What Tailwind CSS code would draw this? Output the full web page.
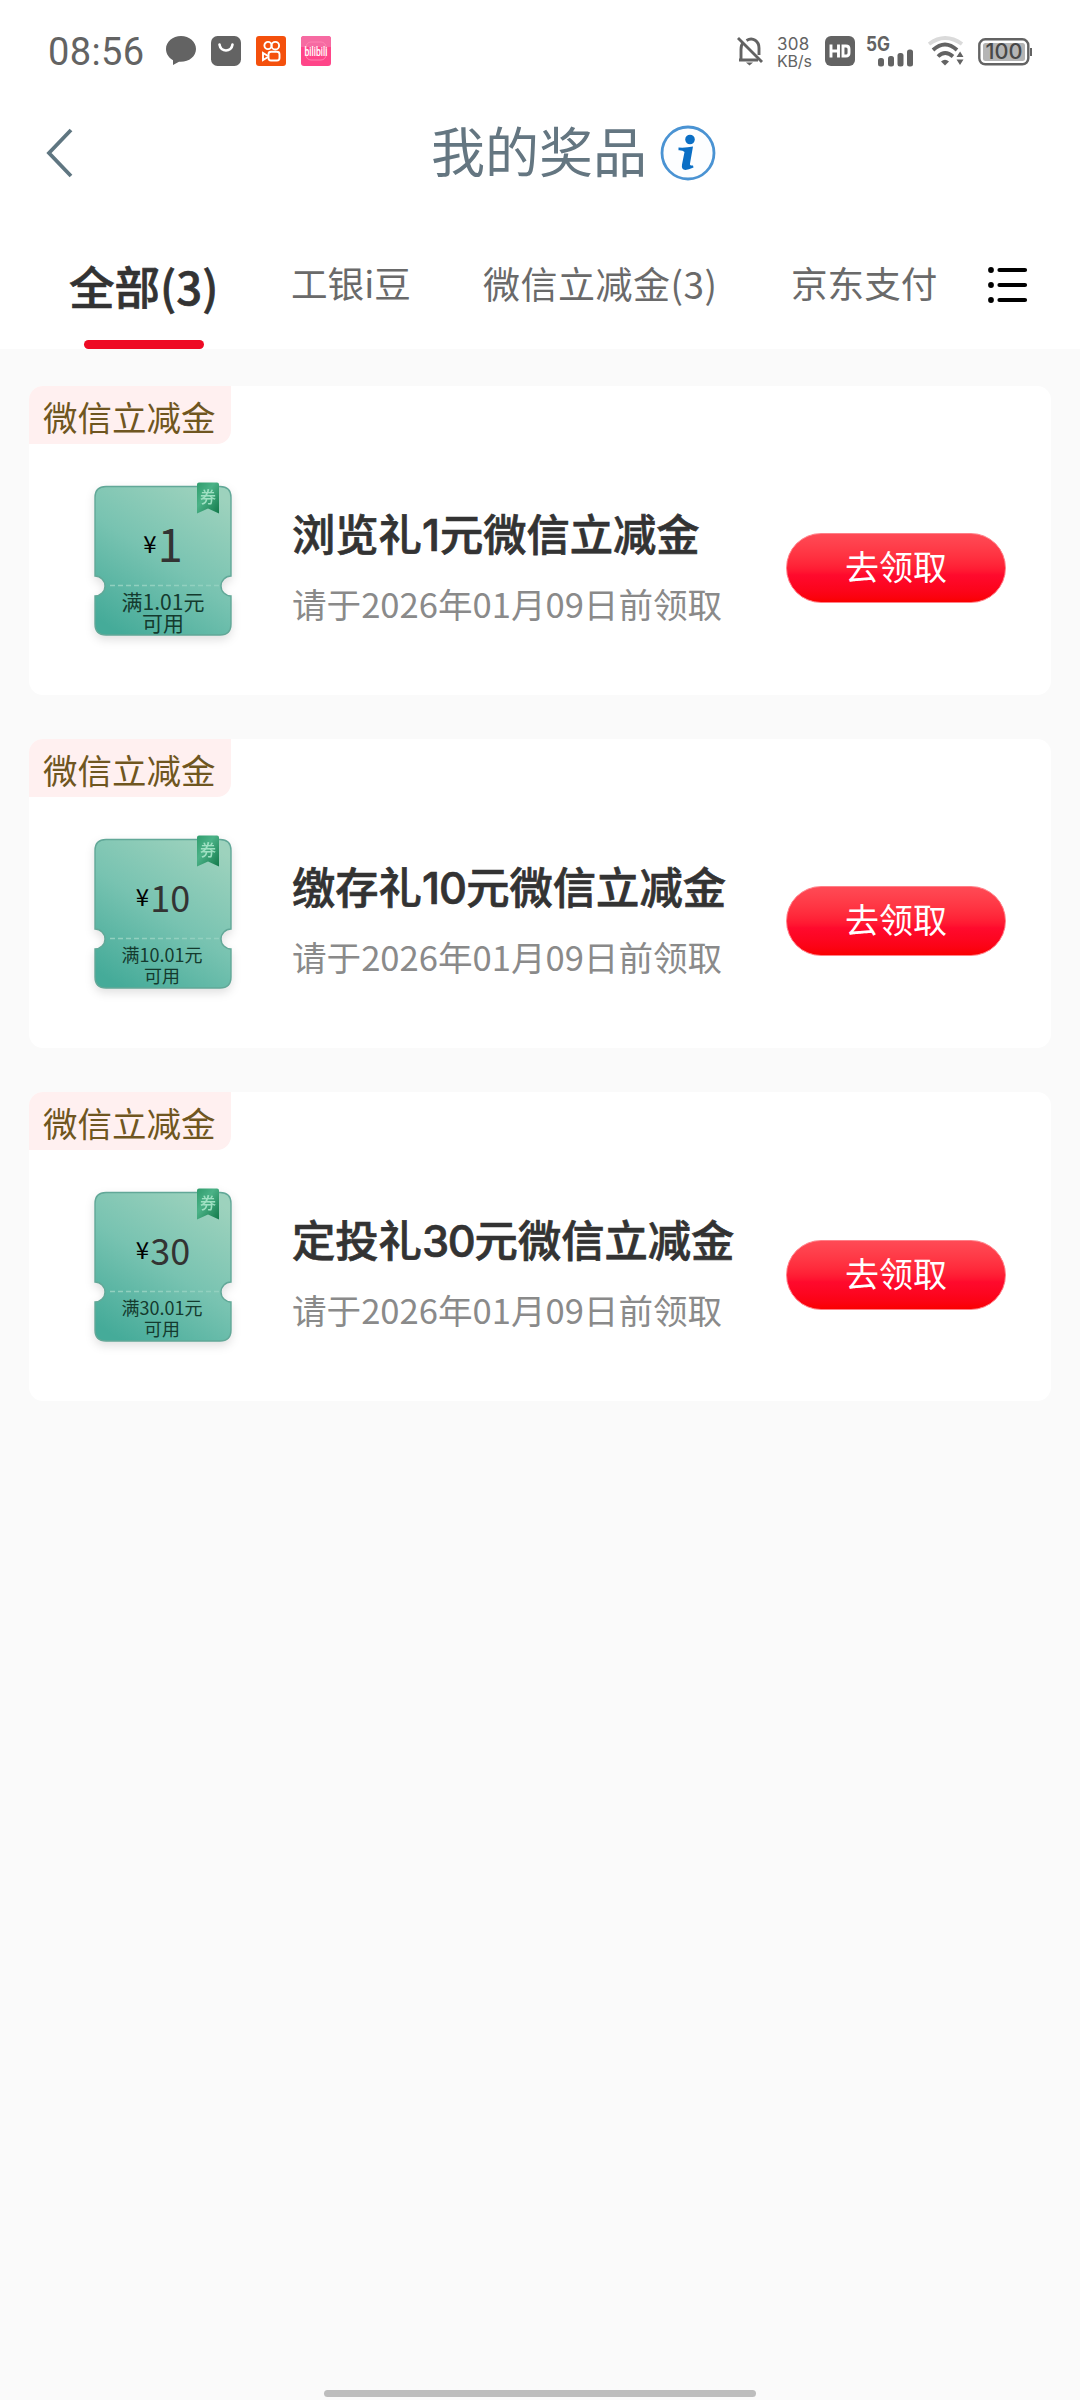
<!DOCTYPE html>
<html lang="zh-CN">
<head>
<meta charset="utf-8">
<title>我的奖品</title>
<script src="https://cdn.jsdelivr.net/npm/@tailwindcss/browser@4"></script>
</head>
<body class="w-[1080px] h-[2400px] overflow-hidden bg-[#fafafa] font-['Noto_Sans_CJK_SC',sans-serif] flex flex-col">

<svg width="0" height="0" class="absolute">
  <defs>
    <linearGradient id="tk" x1="0.8" y1="0" x2="0.2" y2="1">
      <stop offset="0" stop-color="#9dd2bd"/><stop offset="0.5" stop-color="#78c3b1"/><stop offset="1" stop-color="#45ab99"/>
    </linearGradient>
    <linearGradient id="rb" x1="0" y1="0" x2="1" y2="1">
      <stop offset="0" stop-color="#2f9c6c"/><stop offset="0.4" stop-color="#4bb287"/><stop offset="1" stop-color="#12794a"/>
    </linearGradient>
    <symbol id="ticket" viewBox="0 0 153 170">
      <path d="M19 12.500H133Q144 12.500 144 23.500V102A10 10 0 0 0 144 122V150Q144 161 133 161H19Q8 161 8 150V122A10 10 0 0 0 8 102V23.500Q8 12.500 19 12.500Z" fill="url(#tk)" stroke="#62a898" stroke-width="1.4"/>
      <path d="M23 111.500H132" stroke="#92d0bf" stroke-width="1.3" stroke-dasharray="5 3"/>
      <path d="M110 10.500Q110 8.500 112 8.500H130Q132 8.500 132 10.500V39.500L121 34.500L110 39.500Z" fill="url(#rb)"/>
      <text x="121" y="29" font-size="16" font-weight="500" fill="#9fe0c2" text-anchor="middle">券</text>
    </symbol>
  </defs>
</svg>

<header class="h-[349px] shrink-0 bg-white flex flex-col">
  <div class="h-[102px] flex items-center pl-[48px] pr-[48px] text-[#636363]">
    <span class="w-[118px] text-[38px] leading-[38px] mt-[2px] font-['Roboto'] tracking-[0.4px]">08:56</span>
    <div class="flex gap-[15px]">
      <svg width="30" height="30" viewBox="0 0 30 30"><path d="M15 0C6.700 0 0 5.700 0 13c0 5 3 8.900 7 11.200V29l6-3.200c9.500.8 17-5.300 17-12.800C30 5.700 23.300 0 15 0Z" fill="#636363"/></svg>
      <svg width="30" height="30" viewBox="0 0 30 30"><rect width="30" height="30" rx="6.500" fill="#636363"/><path d="M8.500 8.500c1 8 12 8 13 0" fill="none" stroke="#fff" stroke-width="2.600" stroke-linecap="round"/></svg>
      <svg width="30" height="30" viewBox="0 0 30 30"><rect width="30" height="30" rx="3" fill="#f4500c"/><g fill="none" stroke="#fff" stroke-width="1.900"><circle cx="12" cy="9.500" r="3.600"/><circle cx="19.300" cy="9.700" r="3.800"/><rect x="12.500" y="15.700" width="11" height="8.800" rx="2.500"/><path d="M12 20L7 17v7l5-3"/></g></svg>
      <svg width="30" height="30" viewBox="0 0 30 30"><rect width="30" height="30" rx="3" fill="#ff4589"/><path d="M0 3q0-3 3-3h24q3 0 3 3v8H0Z" fill="#f66ba2"/><rect x="5" y="6" width="20" height="18" rx="5" fill="none" stroke="#ff82b1"/><text x="15" y="19.500" text-anchor="middle" font-family="Roboto" font-weight="500" font-size="12" textLength="23" lengthAdjust="spacingAndGlyphs" fill="#fff">bilibili</text></svg>
    </div>
    <div class="ml-auto flex items-center">
      <svg width="28" height="30" viewBox="0 0 28 30"><g fill="none" stroke="#636363" stroke-width="2.900"><path d="M2 2L26 26"/><path d="M3 24H22M5 24V13.500Q5 9 7 7M10.500 4.500C17 .5 23 5.500 23 12v7"/></g><path d="M10 26.500h7l-3.500 3Z" fill="#636363"/></svg>
      <div class="mt-[3px] ml-[13px] w-[48px] flex flex-col font-['Inter'] text-[17px] leading-[17px]"><span class="tracking-[0.3px]">308</span><span class="text-[16px] tracking-[-0.2px]">KB/s</span></div>
      <svg width="30" height="30" viewBox="0 0 30 30"><rect width="30" height="30" rx="6" fill="#636363"/><path d="M6 8.500V21.500M13.500 8.500V21.500M6 15H13.500M18 10V20H21Q24 20 24 17V13Q24 10 21 10Z" fill="none" stroke="#fff" stroke-width="2.900"/></svg>
      <svg class="ml-[10px] overflow-visible" width="51" height="32" viewBox="0 0 51 32"><text x="1" y="16" font-family="Inter" font-weight="700" font-size="19.500" textLength="24" lengthAdjust="spacingAndGlyphs" fill="#636363">5G</text><g fill="#636363"><rect x="13" y="23" width="6" height="8.500" rx="2.500"/><rect x="23" y="21" width="6" height="10.500" rx="2.500"/><rect x="32.500" y="18" width="6" height="13.500" rx="2.500"/><rect x="42" y="14.500" width="6" height="17" rx="2.500"/></g></svg>
      <svg class="ml-[12px]" width="37" height="30" viewBox="0 0 37 30"><g fill="none" stroke-width="3.800"><path d="M1 8Q17-4 34 8" stroke="#dadada"/><path d="M5 14Q17 3 29 14M10 20.500Q17 13.500 25 20.500" stroke="#636363"/></g><path d="M13 25.500Q17 22 21 25.500L17 29.500Z" fill="#636363"/><path d="M28.500 21l3.600-5.500L35.500 21ZM28.500 23.500h7l-3.500 5.500Z" fill="#636363"/></svg>
      <svg class="ml-[13px]" width="54" height="32" viewBox="0 0 54 32"><rect x="1.300" y="4.300" width="49" height="25" rx="6" fill="none" stroke="#636363" stroke-width="2.400"/><rect x="5" y="8" width="42" height="18" rx="2.500" fill="#b5b5b5"/><path d="M53 13v8" stroke="#636363" stroke-width="2"/><text x="26" y="24.300" text-anchor="middle" font-family="Inter" font-weight="500" font-size="21" textLength="37" lengthAdjust="spacingAndGlyphs" fill="#484848">100</text></svg>
    </div>
  </div>

  <div class="h-[102px] flex items-center pl-[44px]">
    <svg width="30" height="50" viewBox="0 0 30 50"><path d="M27 2L5 25L27 48" fill="none" stroke="#5f7681" stroke-width="3.800"/></svg>
    <h1 class="-mt-[7px] ml-[357px] text-[54px] leading-[60px] text-[#647681]">我的奖品</h1>
    <svg class="ml-[12px]" width="58" height="58" viewBox="0 0 58 58"><circle cx="29" cy="29" r="26" fill="#fdfeff" stroke="#4a93d3" stroke-width="2.800"/><circle cx="31" cy="15.500" r="4.800" fill="#0b6fc5"/><path d="M19.500 23.500Q27 24 34 22.500L31 39.500Q30.500 42 34 41.500L34.500 43.500Q21.500 49.500 23 40.500L25.500 28Q24 26 19.500 26.200Z" fill="#0b6fc5"/></svg>
  </div>

  <nav class="h-[145px] flex pl-[69px] text-[37px] text-[#6a6a6a] whitespace-nowrap">
    <div class="w-[222px] h-full flex flex-col">
      <span class="mt-[53px] text-[45.500px] leading-[56px] font-medium text-[#333] [-webkit-text-stroke:0.7px_#333]">全部(3)</span>
      <span class="mt-auto ml-[15px] w-[120px] h-[9px] rounded-full bg-[#ee0a24]"></span>
    </div>
    <span class="w-[192px] mt-[51px] leading-[56px] text-[36.600px]">工银i豆</span>
    <span class="w-[308px] mt-[51px] leading-[56px] tracking-[0.5px]">微信立减金(3)</span>
    <span class="w-[196px] mt-[51px] leading-[56px] text-[36.600px]">京东支付</span>
    <svg class="mt-[61px]" width="42" height="40" viewBox="0 0 42 40"><g stroke="#000" stroke-width="4.200" stroke-linecap="round"><path d="M12.500 5H38M12.500 20H38M12.500 35H38"/></g><circle cx="4" cy="5" r="2.900"/><circle cx="4" cy="20" r="2.900"/><circle cx="4" cy="35" r="2.900"/></svg>
  </nav>
</header>

<main class="pt-[37px] px-[29px] flex flex-col gap-[44px]">
  <section class="h-[309px] rounded-[14px] bg-white overflow-hidden flex flex-col">
    <div class="w-[202px] h-[58px] rounded-br-[14px] bg-[#fff0f0] pl-[14px] text-[34.500px] leading-[60px] text-[#6f5620]">微信立减金</div>
    <div class="flex">
      <div class="relative ml-[58px] mt-[30px] w-[153px] h-[170px]">
        <svg class="absolute inset-0 drop-shadow-[0_4px_5px_rgba(0,0,0,0.12)]" width="153" height="170"><use href="#ticket"/></svg>
        <div class="relative h-full w-[152px] flex flex-col items-center">
          <div class="mt-[39px] h-[60px] flex items-center text-[#333]"><span class="text-[24px] leading-[60px] text-black">¥</span><span class="ml-[1px] text-[45px] leading-[60px]">1</span></div>
          <div class="mt-[18px] text-center text-[21px] leading-[21px] text-[#143a2e]">满1.01元<br>可用</div>
        </div>
      </div>
      <div class="ml-[52px] mt-[60px] w-[494px] whitespace-nowrap">
        <h2 class="text-[43.300px] leading-[56px] font-medium text-[#333] [-webkit-text-stroke:0.7px_#333]">浏览礼<span class="font-['Inter']">1</span>元微信立减金</h2>
        <p class="mt-[16px] text-[34.600px] leading-[48px] text-[#8a8a8a]">请于2026年01月09日前领取</p>
      </div>
      <button class="mt-[89px] w-[220px] h-[70px] rounded-full bg-linear-to-b from-[#ff4a55] via-[#ff0a2d] via-60% to-[#fa0000] border border-[#ff8088] text-[34px] leading-[64px] pb-[4px] text-white">去领取</button>
    </div>
  </section>

  <section class="h-[309px] rounded-[14px] bg-white overflow-hidden flex flex-col">
    <div class="w-[202px] h-[58px] rounded-br-[14px] bg-[#fff0f0] pl-[14px] text-[34.500px] leading-[60px] text-[#6f5620]">微信立减金</div>
    <div class="flex">
      <div class="relative ml-[58px] mt-[30px] w-[153px] h-[170px]">
        <svg class="absolute inset-0 drop-shadow-[0_4px_5px_rgba(0,0,0,0.12)]" width="153" height="170"><use href="#ticket"/></svg>
        <div class="relative h-full w-[152px] flex flex-col items-center">
          <div class="mt-[39px] h-[60px] flex items-center text-[#333]"><span class="text-[24px] leading-[60px] text-black">¥</span><span class="ml-[1px] text-[36px] leading-[60px]">10</span></div>
          <div class="mt-[18px] pr-[2px] text-center text-[18px] leading-[21px] text-[#143a2e]">满10.01元<br>可用</div>
        </div>
      </div>
      <div class="ml-[52px] mt-[60px] w-[494px] whitespace-nowrap">
        <h2 class="text-[43.300px] leading-[56px] font-medium text-[#333] [-webkit-text-stroke:0.7px_#333]">缴存礼<span class="font-['Inter'] tracking-[-0.8px]">10</span>元微信立减金</h2>
        <p class="mt-[16px] text-[34.600px] leading-[48px] text-[#8a8a8a]">请于2026年01月09日前领取</p>
      </div>
      <button class="mt-[89px] w-[220px] h-[70px] rounded-full bg-linear-to-b from-[#ff4a55] via-[#ff0a2d] via-60% to-[#fa0000] border border-[#ff8088] text-[34px] leading-[64px] pb-[4px] text-white">去领取</button>
    </div>
  </section>

  <section class="h-[309px] rounded-[14px] bg-white overflow-hidden flex flex-col">
    <div class="w-[202px] h-[58px] rounded-br-[14px] bg-[#fff0f0] pl-[14px] text-[34.500px] leading-[60px] text-[#6f5620]">微信立减金</div>
    <div class="flex">
      <div class="relative ml-[58px] mt-[30px] w-[153px] h-[170px]">
        <svg class="absolute inset-0 drop-shadow-[0_4px_5px_rgba(0,0,0,0.12)]" width="153" height="170"><use href="#ticket"/></svg>
        <div class="relative h-full w-[152px] flex flex-col items-center">
          <div class="mt-[39px] h-[60px] flex items-center text-[#333]"><span class="text-[24px] leading-[60px] text-black">¥</span><span class="ml-[1px] text-[36px] leading-[60px]">30</span></div>
          <div class="mt-[18px] pr-[2px] text-center text-[18px] leading-[21px] text-[#143a2e]">满30.01元<br>可用</div>
        </div>
      </div>
      <div class="ml-[52px] mt-[60px] w-[494px] whitespace-nowrap">
        <h2 class="text-[43.300px] leading-[56px] font-medium text-[#333] [-webkit-text-stroke:0.7px_#333]">定投礼<span class="font-['Inter'] tracking-[-1.2px]">30</span>元微信立减金</h2>
        <p class="mt-[16px] text-[34.600px] leading-[48px] text-[#8a8a8a]">请于2026年01月09日前领取</p>
      </div>
      <button class="mt-[90px] w-[220px] h-[70px] rounded-full bg-linear-to-b from-[#ff4a55] via-[#ff0a2d] via-60% to-[#fa0000] border border-[#ff8088] text-[34px] leading-[64px] pb-[4px] text-white">去领取</button>
    </div>
  </section>
</main>

<div class="mt-auto mb-[3px] mx-auto w-[432px] h-[7px] shrink-0 rounded-full bg-[#bdbdbd]"></div>
</body>
</html>
